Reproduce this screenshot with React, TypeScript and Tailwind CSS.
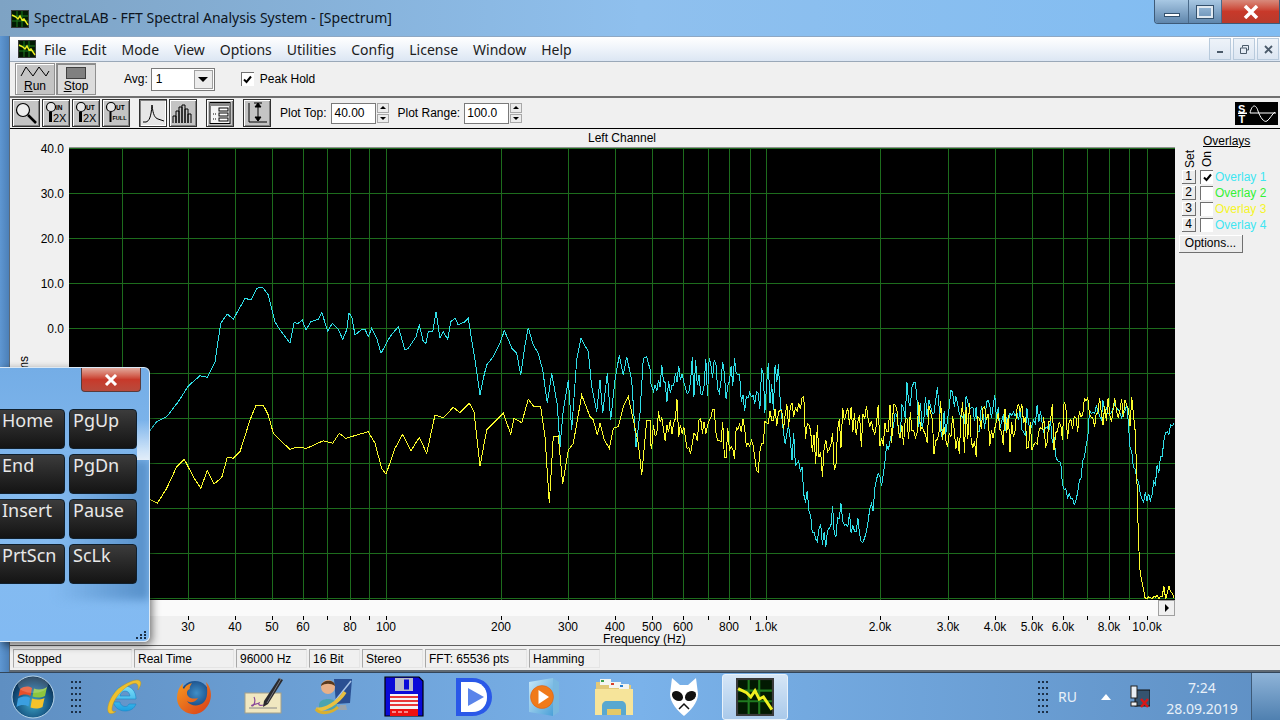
import React from "react";

const SANS = "[font-family:'Liberation_Sans',Arial,sans-serif]";
const UI = "[font-family:'Noto_Sans',sans-serif]";

type Pt = [number, number];

// traced off the left half of the plot, in zoomed crop coordinates
const cyanLeft: Pt[] = [[0,452],[20,425],[50,410],[85,365],[115,318],[150,287],[172,292],[195,245],[212,130],[232,102],[250,118],[285,55],[303,60],[320,25],[338,22],[355,45],[375,125],[390,150],[420,190],[432,128],[445,130],[457,120],[468,150],[482,125],[505,118],[515,97],[533,153],[547,130],[565,148],[578,178],[590,150],[597,100],[605,110],[615,165],[635,148],[645,148],[655,170],[665,145],[680,175],[693,220],[720,170],[745,140],[765,210],[775,205],[798,170],[808,135],[820,185],[828,190],[835,155],[848,155],[858,95],[870,175],[880,155],[893,178],[902,125],[915,115],[925,135],[945,125],[955,115],[965,180],[975,240],[990,345],[1000,295],[1010,255],[1030,230],[1050,190],[1063,152],[1078,185],[1085,205],[1100,220],[1112,285],[1125,195],[1135,143],[1150,195],[1165,220],[1178,270],[1192,370],[1205,280],[1222,375],[1230,500],[1240,390],[1255,300],[1265,450],[1280,240],[1293,175],[1315,215],[1325,320],[1340,395],[1350,300],[1358,400],[1372,280],[1382,420],[1395,300],[1408,225],[1420,285],[1430,230],[1445,300],[1458,500],[1470,400],[1480,235],[1490,230],[1500,268]];
const yellowLeft: Pt[] = [[0,658],[22,670],[50,625],[80,560],[103,538],[130,590],[152,625],[172,572],[192,612],[215,593],[232,532],[250,535],[270,515],[300,420],[318,376],[340,376],[355,405],[370,460],[395,485],[420,508],[440,502],[470,505],[520,482],[548,490],[568,460],[587,475],[655,455],[675,490],[695,565],[708,583],[735,505],[758,463],[783,512],[808,472],[830,520],[855,405],[880,413],[910,382],[930,398],[958,370],[972,395],[990,558],[1010,450],[1060,400],[1082,462],[1092,415],[1115,428],[1135,358],[1150,378],[1172,380],[1185,470],[1198,670],[1210,470],[1225,468],[1238,612],[1255,510],[1270,490],[1295,345],[1320,410],[1330,420],[1342,465],[1350,430],[1362,478],[1378,505],[1390,445],[1405,440],[1420,380],[1435,350],[1450,420],[1465,490],[1475,585],[1490,420],[1500,420]];

// right half is too dense to trace: envelope [x, mean, amplitude] plus noise
const cyanEnv: number[][] = [[0,120,40],[100,130,70],[200,120,55],[300,150,70],[380,130,80],[400,250,60],[440,370,40],[460,500,50],[510,590,30],[550,540,50],[590,530,30],[635,610,40],[660,480,30],[700,370,60],[730,280,60],[745,200,50],[800,190,70],[880,210,70],[960,240,40],[1020,200,50],[1100,240,40],[1180,250,40],[1200,340,40],[1230,470,25],[1255,480,30],[1285,350,30],[1300,240,40],[1340,210,30],[1410,220,30],[1425,350,30],[1450,460,30],[1475,490,30],[1500,400,25],[1520,310,25],[1550,245,5]];
const yellowEnv: number[][] = [[0,280,40],[80,230,40],[110,300,50],[180,240,40],[240,340,60],[265,250,30],[330,350,60],[345,240,20],[450,210,50],[500,320,70],[550,350,60],[570,250,50],[640,260,50],[760,270,60],[830,280,80],[1000,270,60],[1200,260,55],[1290,220,40],[1430,215,40],[1438,250,20],[1442,550,5],[1450,700,5],[1465,775,3],[1505,770,5],[1535,745,30],[1550,775,3]];

function noisy(env: number[][], seed: number) {
  let s = seed;
  const rnd = () => {
    s = (s * 1103515245 + 12345) % 2147483648;
    return s / 2147483648;
  };
  const out: string[] = [];
  for (let x = 0; x <= 1550; x += 5) {
    let i = 0;
    while (i < env.length - 2 && env[i + 1][0] < x) i++;
    const a = env[i];
    const b = env[i + 1];
    const t = Math.min(1, Math.max(0, (x - a[0]) / (b[0] - a[0])));
    const mean = a[1] + (b[1] - a[1]) * t;
    const amp = a[2] + (b[2] - a[2]) * t;
    const v = rnd() * 2 - 1;
    const y = mean + amp * 1.3 * Math.sign(v) * Math.pow(Math.abs(v), 1.4);
    out.push(`${(650 + x / 2.958).toFixed(1)},${(340 + Math.min(y, 777) / 3).toFixed(1)}`);
  }
  return out.join(" ");
}

const traced = (pts: Pt[]) => pts.map(([x, y]) => `${(150 + x / 3).toFixed(1)},${(280 + y / 3).toFixed(1)}`).join(" ");

const cyanTrace = traced(cyanLeft) + " " + noisy(cyanEnv, 77);
const yellowTrace = traced(yellowLeft) + " " + noisy(yellowEnv, 4242);

const vGrid = [122, 188, 235, 272, 303, 327, 350, 369, 386, 501, 568, 615, 652, 683, 708, 729, 750, 766, 880, 948, 995, 1032, 1063, 1087, 1109, 1129, 1147];
const hGrid = [148, 193, 238, 283, 328, 373, 418, 463, 508, 553, 598];
const yLabels = ["40.0", "30.0", "20.0", "10.0", "0.0"];
const xLabels: [string, number][] = [["30",188],["40",235],["50",272],["60",303],["80",350],["100",386],["200",501],["300",568],["400",615],["500",652],["600",683],["800",729],["1.0k",766],["2.0k",880],["3.0k",948],["4.0k",995],["5.0k",1032],["6.0k",1063],["8.0k",1109],["10.0k",1147]];
const xTicks = [188,235,272,303,327,350,369,386,501,568,615,652,683,708,729,750,766,880,948,995,1032,1063,1087,1109,1129,1147];

const menus = ["File", "Edit", "Mode", "View", "Options", "Utilities", "Config", "License", "Window", "Help"];
const statusCells: [string, string][] = [["Stopped","w-[119px]"],["Real Time","w-[100px]"],["96000 Hz","w-[71px]"],["16 Bit","w-[51px]"],["Stereo","w-[61px]"],["FFT: 65536 pts","w-[102px]"],["Hamming","w-[71px]"]];
const keys = ["Home", "PgUp", "End", "PgDn", "Insert", "Pause", "PrtScn", "ScLk"];
const overlays: [string, string][] = [["Overlay 1","text-[#3fe6f2]"],["Overlay 2","text-[#35f035]"],["Overlay 3","text-[#f5f52a]"],["Overlay 4","text-[#3fe6f2]"]];

function AppIcon({ size = 18 }: { size?: number }) {
  return (
    <svg width={size} height={size} viewBox="0 0 18 18">
      <rect width="18" height="18" fill="#3a3a3a" />
      <rect x="1" y="1" width="16" height="16" fill="#021a02" />
      <path d="M1 6H17M1 11H17M6 1V17M11 1V17" stroke="#1f7a1f" strokeWidth="1" />
      <path d="M1 5L5 7L7 9L9 6L11 10L13 9L17 15" stroke="#f0f020" strokeWidth="1.4" fill="none" />
    </svg>
  );
}

function ToolBtn({ children, active, className = "" }: { children: React.ReactNode; active?: boolean; className?: string }) {
  return (
    <div className={`w-[28px] h-[28px] border border-[#303030] flex items-center justify-center shrink-0 ${active ? "bg-[#e6e6e6] shadow-[inset_1px_1px_0_#808080,inset_-1px_-1px_0_#fff]" : "bg-[#c4c4c4] shadow-[inset_1px_1px_0_#fff,inset_-1px_-1px_0_#808080]"} ${className}`}>
      {children}
    </div>
  );
}

function Lens({ label, sub, full }: { label: string; sub: string; full?: boolean }) {
  return (
    <svg width="26" height="26" viewBox="0 0 26 26">
      <circle cx="8" cy="7" r="4.5" fill="#e8e8e8" stroke="#000" strokeWidth="1.2" />
      <path d="M7.5 12V22" stroke="#000" strokeWidth={full ? 2 : 3} />
      <text x="13" y="9.5" fontSize="6.500" fontWeight="700" fontFamily="Liberation Sans" fill="#000">{label}</text>
      <text x={full ? 9.5 : 10} y={full ? 20 : 22} fontSize={full ? 5.5 : 11} fontWeight={full ? 700 : 400} fontFamily="Liberation Sans" fill="#000">{sub}</text>
    </svg>
  );
}

function Spin() {
  return (
    <div className="w-[12px] h-[20px] flex flex-col gap-px shrink-0">
      <div className="flex-1 bg-[#ececec] border border-[#a8a8a8] flex items-center justify-center">
        <div className="w-0 h-0 border-x-[3px] border-x-transparent border-b-[3px] border-b-black" />
      </div>
      <div className="flex-1 bg-[#ececec] border border-[#a8a8a8] flex items-center justify-center">
        <div className="w-0 h-0 border-x-[3px] border-x-transparent border-t-[3px] border-t-black" />
      </div>
    </div>
  );
}

function Check({ on, className = "" }: { on?: boolean; className?: string }) {
  return (
    <div className={`w-[13px] h-[14px] bg-white border-l border-t border-[#707070] flex items-center justify-center shrink-0 ${className}`}>
      {on && (
        <svg width="9" height="9" viewBox="0 0 9 9">
          <path d="M1 4.5L3.5 7L8 1.5" stroke="#000" strokeWidth="2" fill="none" />
        </svg>
      )}
    </div>
  );
}

function Spectrum() {
  return (
    <svg width="1106" height="452" viewBox="69 148 1106 452" className="block bg-black shrink-0">
      <g stroke="#1d6c1d" strokeWidth="1" shapeRendering="crispEdges">
        {hGrid.map((y) => (
          <line key={y} x1="69" x2="1175" y1={y + 0.5} y2={y + 0.5} />
        ))}
        {vGrid.map((x) => (
          <line key={x} y1="148" y2="600" x1={x + 0.5} x2={x + 0.5} />
        ))}
      </g>
      <polyline points={cyanTrace} fill="none" stroke="#30dfe8" strokeWidth="1" shapeRendering="crispEdges" />
      <polyline points={yellowTrace} fill="none" stroke="#fbfb2c" strokeWidth="1" shapeRendering="crispEdges" />
    </svg>
  );
}

function Orb() {
  return (
    <svg width="44" height="44" viewBox="0 0 44 44">
      <defs>
        <radialGradient id="orb" cx="50%" cy="65%" r="60%">
          <stop offset="0" stopColor="#3fa7c8" />
          <stop offset="0.7" stopColor="#14507e" />
          <stop offset="1" stopColor="#0b2f4f" />
        </radialGradient>
      </defs>
      <circle cx="22" cy="22" r="21" fill="url(#orb)" stroke="#b9d6ea" strokeWidth="1" />
      <path d="M9 14C14 11 17 11 21 13L19.5 21C15.5 19 12 19 7.5 21.5Z" fill="#e8502a" />
      <path d="M23 13.5C27 15 31 15 36 12L34 21C29.5 23 26 23 21.5 21.5Z" fill="#8dc63f" />
      <path d="M7 23.5C12 21 15.5 21 19 23L17.5 31.5C13.5 29.5 10 29.5 5.5 32Z" fill="#3b9fe0" />
      <path d="M21 23.5C25.5 25 29 25 33.5 23L31.5 32C27 34 24 34 19.5 32.5Z" fill="#f5c22a" />
      <ellipse cx="22" cy="10" rx="15" ry="8" fill="#fff" opacity="0.18" />
    </svg>
  );
}

function IeIcon() {
  return (
    <svg width="38" height="38" viewBox="0 0 38 38">
      <defs>
        <linearGradient id="ie" x1="0" y1="0" x2="0" y2="1">
          <stop offset="0" stopColor="#7fe0fa" />
          <stop offset="1" stopColor="#1b9fe0" />
        </linearGradient>
      </defs>
      <path d="M9 21H31C31 13 26 8 20 8C13 8 8 14 8 21C8 28 13 33 20 33C25 33 29 31 31 26H24C23 28 22 28.500 20 28.500C17 28.500 15 26 15 24H9ZM15 18C15.500 15 17.500 13 20 13C23 13 24.500 15 25 18Z" fill="url(#ie)" fillRule="evenodd" stroke="#1a86c8" strokeWidth="0.6" />
      <path d="M4 35C0 31 6 15 17 8C24 4 32 0 35 3C37 5 35 9 33 12C34 7 32 4 27 6C17 10 8 22 7 30C6.500 33 8 34 11 33.500C8 36 5 36 4 35Z" fill="#eec02e" stroke="#b98d12" strokeWidth="0.4" />
    </svg>
  );
}

function FirefoxIcon() {
  return (
    <svg width="38" height="38" viewBox="0 0 38 38">
      <defs>
        <radialGradient id="ffb" cx="55%" cy="40%" r="55%">
          <stop offset="0" stopColor="#3f8fc8" />
          <stop offset="1" stopColor="#123f7a" />
        </radialGradient>
        <linearGradient id="ffo" x1="0" y1="0" x2="1" y2="1">
          <stop offset="0" stopColor="#f69a1f" />
          <stop offset="1" stopColor="#d83b1a" />
        </linearGradient>
      </defs>
      <circle cx="20" cy="18" r="15" fill="url(#ffb)" />
      <path d="M31 4C36 9 37 17 35 23C32 32 24 37 17 36C8 35 2 28 2 20C2 14 4 9 8 5C7 9 8 10 9 11C11 7 14 6 17 5C15 8 14 10 15 11C12 12 11 15 13 18C15 21 20 21 23 20C20 25 15 25 12 23C15 28 23 29 28 25C33 21 33 12 31 4Z" fill="url(#ffo)" />
    </svg>
  );
}

function SignIcon() {
  return (
    <svg width="40" height="40" viewBox="0 0 40 40">
      <rect x="1" y="16" width="36" height="20" fill="#f0e7c0" stroke="#a4a08a" strokeWidth="1" />
      <path d="M5 31H33" stroke="#888" strokeWidth="1" />
      <path d="M10 20C12 24 10 29 8 29C6 28 13 27 15 26C14 28 16 29 20 28" stroke="#8a4a9a" strokeWidth="1.2" fill="none" />
      <path d="M35 1L39 3L24 27L19 30L20 24Z" fill="#2a2a2e" />
      <path d="M35 1L37 2L23 26" stroke="#8a8a90" strokeWidth="0.8" fill="none" />
    </svg>
  );
}

function UserIcon() {
  return (
    <svg width="40" height="40" viewBox="0 0 40 40">
      <path d="M20 2L38 2L36 26L22 27Z" fill="#2a4f92" />
      <path d="M21 24L37 4" stroke="#a8c4e8" strokeWidth="1.5" />
      <path d="M26 28H32L33 33H24Z" fill="#9aa4ac" />
      <circle cx="14" cy="10" r="7" fill="#e8b088" />
      <path d="M7 9C7 3 21 1 21 9C17 6 11 6 7 9Z" fill="#5a3a1e" />
      <path d="M5 28C5 20 23 20 23 28V33H5Z" fill="#4aa4b0" />
      <path d="M2 32C10 34 24 26 31 15" stroke="#e8c040" strokeWidth="3.5" fill="none" />
      <path d="M2 32C6 38 18 36 24 30" stroke="#d8b030" strokeWidth="3" fill="none" />
    </svg>
  );
}

function FloppyIcon() {
  return (
    <svg width="40" height="42" viewBox="0 0 40 42">
      <path d="M1 1H35L39 5V40H1Z" fill="#0a0ad8" stroke="#000" strokeWidth="1.2" />
      <rect x="11" y="2" width="18" height="13" fill="#b8bcc8" />
      <rect x="20" y="3.500" width="5" height="10" fill="#0a0ad8" />
      <rect x="6" y="18" width="28" height="22" fill="#f4f4f4" />
      <path d="M6 21H34M6 25H34M6 29H34" stroke="#e83838" strokeWidth="2" />
      <rect x="6" y="33" width="28" height="7" fill="#ee1010" />
      <path d="M8 36H12M14 36H18M20 36H24" stroke="#fff" strokeWidth="1.2" />
    </svg>
  );
}

function DIcon() {
  return (
    <svg width="38" height="40" viewBox="0 0 38 40">
      <path fillRule="evenodd" d="M1 1H17C29 1 37 9 37 20C37 31 29 39 17 39H1ZM6 5V35H17C26 35 32 29 32 20C32 11 26 5 17 5Z" fill="#2a58e8" />
      <path fillRule="evenodd" d="M6 5H17C26 5 32 11 32 20C32 29 26 35 17 35H6Z" fill="#fff" />
      <path d="M13 11L29 20L13 29Z" fill="#5a84ea" />
    </svg>
  );
}

function WmpIcon() {
  return (
    <svg width="34" height="40" viewBox="0 0 34 40">
      <defs>
        <linearGradient id="wmp" x1="0" y1="0" x2="1" y2="1">
          <stop offset="0" stopColor="#c8e8f8" />
          <stop offset="1" stopColor="#4aa0d8" />
        </linearGradient>
      </defs>
      <path d="M2 5L26 1V39L2 35Z" fill="url(#wmp)" />
      <path d="M26 1L32 5V35L26 39Z" fill="#78b8e0" />
      <circle cx="15" cy="20" r="11.500" fill="#f07a1a" stroke="#d85a10" strokeWidth="0.5" />
      <path d="M11.500 13L22 20L11.500 27Z" fill="#fff" />
    </svg>
  );
}

function FolderIcon() {
  return (
    <svg width="40" height="42" viewBox="0 0 40 42">
      <path d="M2 6H14L17 9H37V38H2Z" fill="#e2c878" />
      <rect x="6" y="3" width="11" height="6" fill="#f4f4f0" />
      <rect x="7" y="4" width="3" height="2" fill="#3aa048" />
      <rect x="15" y="6" width="12" height="6" fill="#f4f4f0" />
      <rect x="17" y="7" width="3" height="2" fill="#d8402a" />
      <rect x="25" y="8" width="10" height="6" fill="#f4f4f0" />
      <rect x="26" y="9" width="3" height="2" fill="#2a80d0" />
      <path d="M1 13H39V39H1Z" fill="#f6e49a" />
      <path d="M8 39V30C8 27 10 25 13 25H27C30 25 32 27 32 30V39H27V33H13V39Z" fill="#58a8d0" />
      <rect x="13" y="33" width="14" height="6" fill="#e4c868" />
    </svg>
  );
}

function AlienIcon() {
  return (
    <svg width="30" height="40" viewBox="0 0 30 40">
      <path d="M3 1L11 8H19L27 1L29 17C29 26 21 34 15 39C9 34 1 26 1 17Z" fill="#fff" />
      <ellipse cx="8.500" cy="19" rx="6" ry="4.500" transform="rotate(35 8.500 19)" fill="#111" />
      <ellipse cx="21.500" cy="19" rx="6" ry="4.500" transform="rotate(-35 21.500 19)" fill="#111" />
      <path d="M10 32L15 27L20 32" stroke="#111" strokeWidth="1.500" fill="none" />
    </svg>
  );
}

function TrayNet() {
  return (
    <svg width="20" height="24" viewBox="0 0 20 24">
      <rect x="5" y="5" width="15" height="16" fill="#35536f" stroke="#111" strokeWidth="1" />
      <rect x="1" y="1" width="6" height="12" fill="#e8eef4" stroke="#222" strokeWidth="1" />
      <rect x="1" y="17" width="6" height="4" fill="#f0f0f0" stroke="#222" strokeWidth="1" />
      <path d="M11 14L18 22M18 14L11 22" stroke="#d81818" strokeWidth="2.500" />
    </svg>
  );
}

function Grip() {
  return (
    <div className="grid grid-cols-3 gap-x-[2px] gap-y-[4px] w-[10px]">
      {Array.from({ length: 18 }).map((_, i) => (
        <div key={i} className="w-[2px] h-[2px] bg-[#1c3048]" />
      ))}
    </div>
  );
}

export default function App() {
  return (
    <div className={`relative w-[1280px] h-[720px] overflow-hidden flex flex-col bg-[#6ea6dd] text-black ${SANS}`}>
      {/* title bar */}
      <div className="h-[36px] shrink-0 flex items-start pl-[11px] bg-linear-to-r from-[#7ea3c4] via-[#8fc0ee] to-[#80bcf2]">
        <div className="mt-[10px]"><AppIcon /></div>
        <div className={`ml-[5px] mt-[8px] text-[14px] leading-[20px] text-[#0c1420] ${UI}`}>SpectraLAB - FFT Spectral Analysis System - [Spectrum]</div>
        <div className="ml-auto flex h-[24px] rounded-bl-[4px] overflow-hidden border border-t-0 border-[#3d5a78]">
          <div className="w-[34px] flex items-end justify-center pb-[6px] border-r border-[#4a6a8a] bg-linear-to-b from-[#a8c8e4] to-[#5f86ac]">
            <div className="w-[16px] h-[4px] bg-white border border-[#33506c]" />
          </div>
          <div className="w-[33px] flex items-center justify-center border-r border-[#4a6a8a] bg-linear-to-b from-[#a8c8e4] to-[#5f86ac]">
            <div className="w-[16px] h-[12px] border-2 border-[#dfe8f0] outline outline-[#33506c]" />
          </div>
          <div className="w-[57px] flex items-center justify-center bg-linear-to-b from-[#d88a7c] via-[#c8392a] to-[#b83a2c]">
            <svg width="16" height="14" viewBox="0 0 16 14"><path d="M2 1L14 13M14 1L2 13" stroke="#fff" strokeWidth="3.500" /></svg>
          </div>
        </div>
      </div>

      <div className="flex-1 min-h-0 flex">
        {/* left window frame */}
        <div className="w-[9px] shrink-0 bg-linear-to-r from-[#5f97d2] to-[#4c80b8]" />
        <div className="flex-1 min-w-0 flex flex-col bg-[#f0f0f0] border-l border-[#5c6a78]">
          {/* menu */}
          <div className={`h-[26px] shrink-0 flex items-center pl-[8px] bg-linear-to-b from-white via-[#eef3fa] to-[#dce6f3] border-t border-[#8ea8c4] border-b border-b-[#9aa8b8] text-[14px] text-[#1c1c1c] ${UI}`}>
            <AppIcon size={18} />
            <div className="flex gap-[15px] ml-[8px]">
              {menus.map((m) => (
                <span key={m}>{m}</span>
              ))}
            </div>
            <div className="ml-auto mr-[1px] flex gap-[2px]">
              {["_", "r", "x"].map((b) => (
                <div key={b} className="w-[22px] h-[22px] border border-[#b8cadc] bg-linear-to-b from-[#eef3f9] to-[#dce6f2] flex items-center justify-center">
                  {b === "_" && <div className="w-[6px] h-[2px] mt-[5px] bg-[#4a5a6a]" />}
                  {b === "r" && <svg width="9" height="9" viewBox="0 0 9 9"><path d="M2.500 2.500V.5H8.500V5H6.500M.5 3H6.500V8.500H.5Z" stroke="#4a5a6a" fill="none" /></svg>}
                  {b === "x" && <svg width="9" height="9" viewBox="0 0 9 9"><path d="M1 1L8 8M8 1L1 8" stroke="#4a5a6a" strokeWidth="1.800" /></svg>}
                </div>
              ))}
            </div>
          </div>

          {/* run / stop toolbar */}
          <div className="h-[36px] shrink-0 flex items-center pl-[5px] border-b-2 border-[#707070] text-[12px]">
            <div className="w-[40px] h-[32px] bg-[#c4c4c4] border border-[#909090] shadow-[inset_1px_1px_0_#fff] flex flex-col items-center">
              <svg width="30" height="13" viewBox="0 0 30 13" className="mt-[1px]"><path d="M1 11L6 2L13 11L19 2L26 11L29 6" stroke="#000" fill="none" /></svg>
              <span className="leading-[12px] mt-[2px]"><u>R</u>un</span>
            </div>
            <div className="w-[40px] h-[32px] ml-[1px] bg-[#dcdcdc] border border-[#909090] shadow-[inset_1px_1px_0_#8a8a8a] flex flex-col items-center">
              <div className="w-[20px] h-[12px] mt-[3px] bg-[#808080] border border-[#404040]" />
              <span className="leading-[12px] mt-[1px]"><u>S</u>top</span>
            </div>
            <span className="ml-[28px]">Avg:</span>
            <div className="ml-[3px] w-[64px] h-[23px] bg-white border border-[#7a7a7a] flex items-center pl-[4px] pr-px">
              <span className="text-[12px]">1</span>
              <div className="ml-auto w-[19px] h-[19px] bg-[#ececec] border border-[#a0a0a0] flex items-center justify-center">
                <div className="w-0 h-0 border-x-[5px] border-x-transparent border-t-[5px] border-t-black" />
              </div>
            </div>
            <Check on className="ml-[26px]" />
            <span className="ml-[6px]">Peak Hold</span>
          </div>

          {/* plot toolbar */}
          <div className="h-[31px] shrink-0 flex items-center pl-[2px] pr-[2px] border-b border-black text-[12px]">
            <div className="flex gap-[2px]">
              <ToolBtn>
                <svg width="24" height="24" viewBox="0 0 24 24"><circle cx="9" cy="9" r="6.500" fill="#eee" stroke="#000" strokeWidth="1.200" /><path d="M14 14L22 22" stroke="#000" strokeWidth="2.500" /></svg>
              </ToolBtn>
              <ToolBtn><Lens label="IN" sub="2X" /></ToolBtn>
              <ToolBtn><Lens label="UT" sub="2X" /></ToolBtn>
              <ToolBtn><Lens label="UT" sub="FULL" full /></ToolBtn>
            </div>
            <ToolBtn active className="ml-[9px]">
              <svg width="24" height="24" viewBox="0 0 24 24"><path d="M2 21H5C8 20 10 17 11 4C12 14 14 17 17 18L23 20" stroke="#000" fill="none" /></svg>
            </ToolBtn>
            <ToolBtn className="ml-[2px]">
              <svg width="24" height="24" viewBox="0 0 24 24"><path d="M2 22V15H5V22M5 22V10H8V22M8 22V6H11V22M11 22V4H14V22M14 22V8H17V22M17 22V13H20V22" stroke="#000" fill="none" /></svg>
            </ToolBtn>
            <ToolBtn className="ml-[9px]">
              <svg width="24" height="24" viewBox="0 0 24 24"><rect x="2" y="1.500" width="20" height="21" fill="#f4f4f4" stroke="#000" /><rect x="2" y="2" width="20" height="3" fill="#888" /><rect x="11" y="7" width="9" height="3" fill="#fff" stroke="#000" /><rect x="11" y="12" width="9" height="3" fill="#fff" stroke="#000" /><rect x="11" y="17" width="9" height="3" fill="#fff" stroke="#000" /><path d="M5 13H8M5 18H8" stroke="#000" strokeDasharray="1 1" /></svg>
            </ToolBtn>
            <ToolBtn className="ml-[9px]">
              <svg width="24" height="24" viewBox="0 0 24 24"><path d="M4 2V21H22" stroke="#000" fill="none" /><path d="M13 3V19M10 6L13 2L16 6ZM10 16L13 20L16 16Z" stroke="#000" fill="#000" /><path d="M9 2H17" stroke="#000" /></svg>
            </ToolBtn>
            <span className="ml-[9px]">Plot Top:</span>
            <div className="ml-[5px] w-[45px] h-[21px] bg-white border border-[#7a7a7a] px-[2px] leading-[19px]">40.00</div>
            <div className="ml-[1px]"><Spin /></div>
            <span className="ml-[8px]">Plot Range:</span>
            <div className="ml-[4px] w-[45px] h-[21px] bg-white border border-[#7a7a7a] px-[2px] leading-[19px]">100.0</div>
            <div className="ml-[1px]"><Spin /></div>
            <div className="ml-auto w-[43px] h-[23px] bg-black flex items-center justify-center gap-[1px]">
              <svg width="42" height="21" viewBox="0 0 42 21">
                <text x="2" y="9.500" fontSize="11" fontWeight="700" fontFamily="Liberation Sans" fill="#fff">S</text>
                <text x="2.500" y="20" fontSize="11" fontWeight="700" fontFamily="Liberation Sans" fill="#fff">T</text>
                <rect x="2" y="9.500" width="9" height="1.500" fill="#fff" />
                <path d="M14 10C16 1 20 1 22 8C24 14 28 20 31 18C34 16 36 11 39 9M14 10H40" stroke="#fff" fill="none" />
              </svg>
            </div>
          </div>

          {/* plot area */}
          <div className="flex-1 min-h-0 flex border-b border-[#606060]">
            <div className="w-[1165px] shrink-0 flex flex-col relative">
              <div className="h-[19px] shrink-0 pl-[59px]">
                <div className="h-full text-center text-[12px] leading-[18px] border-b border-[#909090]">Left Channel</div>
              </div>
              <div className="flex h-[452px] shrink-0">
                <div className="w-[59px] h-[452px] shrink-0 flex flex-col -mt-[6px] items-end pr-[5px] text-[12px] relative">
                  {yLabels.map((l) => (
                    <div key={l} className="h-[45px] leading-[14px]">{l}</div>
                  ))}
                  <div className="absolute left-[-5px] top-[226px] -rotate-90 origin-center text-[12px] leading-[14px] whitespace-nowrap">dB rms</div>
                </div>
                <Spectrum />
              </div>
              {/* scroll strip and frequency axis */}
              <div className="ml-[59px] h-[16px] bg-[#fafafa] shrink-0" />
              <div className="relative h-[14px] shrink-0 -ml-[10px]">
                {xTicks.map((x) => (
                  <div key={x} className="absolute top-0 w-px h-[4px] bg-black" style={{ left: x }} />
                ))}
                {xLabels.map(([l, x]) => (
                  <div key={l} className="absolute top-[4px] -translate-x-1/2 text-[12px] leading-[14px]" style={{ left: x }}>{l}</div>
                ))}
              </div>
              <div className="text-[12px] leading-[12px] pl-[593px] mt-[3px]">Frequency (Hz)</div>
              <div className="absolute left-[1148px] top-[471px] w-[17px] h-[16px] bg-[#f0f0f0] border border-[#a0a0a0] flex items-center justify-center">
                <div className="w-0 h-0 border-y-[4px] border-y-transparent border-l-[4px] border-l-black" />
              </div>
            </div>

            {/* overlays panel */}
            <div className="flex-1 min-w-0 text-[12px] pt-[5px] pl-[4px]">
              <div className="pl-[24px] leading-[14px] underline">Overlays</div>
              <div className="flex h-[22px] pl-[4px] gap-[3px]">
                <div className="w-[14px] flex items-center justify-center"><span className="-rotate-90 leading-[14px]">Set</span></div>
                <div className="w-[14px] flex items-center justify-center"><span className="-rotate-90 leading-[14px]">On</span></div>
              </div>
              <div className="flex flex-col gap-[2px] pl-[3px]">
                {overlays.map(([name, color], i) => (
                  <div key={i} className="flex items-center h-[14px]">
                    <div className="w-[14px] h-[14px] border-r border-b border-[#707070] bg-[#ececec] shadow-[inset_1px_1px_0_#fff] text-center leading-[13px]">{i + 1}</div>
                    <Check on={i === 0} className="ml-[4px]" />
                    <span className={`ml-[2px] ${color}`}>{name}</span>
                  </div>
                ))}
              </div>
              <div className="mt-[3px] w-[64px] h-[18px] bg-[#ececec] border-r border-b border-[#707070] shadow-[inset_1px_1px_0_#fff] text-center leading-[17px]">Options...</div>
            </div>
          </div>

          {/* status bar */}
          <div className="h-[26px] shrink-0 flex items-center gap-[2px] pl-[3px] border-b-2 border-[#606a74] text-[12px]">
            {statusCells.map(([t, w]) => (
              <div key={t} className={`${w} h-[19px] pl-[3px] leading-[18px] border-l border-t border-[#a8a8a8] border-r border-r-[#e4e4e4] border-b border-b-[#e4e4e4] shrink-0 whitespace-nowrap`}>{t}</div>
            ))}
          </div>
        </div>
      </div>

      {/* taskbar */}
      <div className={`h-[48px] shrink-0 flex items-center bg-linear-to-r from-[#5f8fc2] via-[#7ab2ea] to-[#5f90c4] border-t border-[#33465a] text-[#e8f0f8] ${UI}`}>
        <div className="w-[66px] flex justify-center"><Orb /></div>
        <div className="w-[23px] flex justify-start pl-[5px]"><Grip /></div>
        <div className="w-[70px] flex justify-center"><IeIcon /></div>
        <div className="w-[70px] flex justify-center"><FirefoxIcon /></div>
        <div className="w-[70px] flex justify-center"><SignIcon /></div>
        <div className="w-[70px] flex justify-center"><UserIcon /></div>
        <div className="w-[70px] flex justify-center"><FloppyIcon /></div>
        <div className="w-[70px] flex justify-center"><DIcon /></div>
        <div className="w-[70px] flex justify-center"><WmpIcon /></div>
        <div className="w-[70px] flex justify-center"><FolderIcon /></div>
        <div className="w-[70px] flex justify-center"><AlienIcon /></div>
        <div className="ml-[3px] w-[66px] h-[46px] rounded-[3px] bg-linear-to-b from-[#d6e6f6] to-[#a9c9ea] border border-[#e8f2fb] flex items-center justify-center">
          <AppIcon size={38} />
        </div>
        <div className="ml-[250px]"><Grip /></div>
        <span className="ml-[10px] text-[14px]">RU</span>
        <div className="ml-[24px] w-0 h-0 border-x-[5px] border-x-transparent border-b-[6px] border-b-white" />
        <div className="ml-[19px]"><TrayNet /></div>
        <div className="ml-[7px] mt-[3px] w-[90px] text-center text-[14px] leading-[21px]">
          <div>7:24</div>
          <div>28.09.2019</div>
        </div>
        <div className="ml-auto w-[29px] h-full bg-linear-to-b from-[#8fb4d8] to-[#4f80b0] border-l border-[#3d5a78]" />
      </div>

      {/* on-screen keyboard, floating over the app */}
      <div className={`absolute left-0 top-[367px] w-[150px] h-[275px] rounded-r-[6px] border border-l-0 border-[#dce9f5] bg-linear-to-b from-[#74ade6] via-[#85bbf0] to-[#82baf2] shadow-[2px_3px_8px_rgba(0,0,0,0.55)] overflow-hidden ${UI}`}>
        <div className="absolute right-0 top-[92px] w-[95px] h-[140px] blur-[4px] bg-linear-to-r from-transparent to-[#568fc8]" />
        <div className="absolute right-0 top-[52px] w-[12px] h-[40px] bg-linear-to-b from-transparent to-white/80" />
        <div className="relative flex justify-end pr-[8px]">
          <div className="w-[60px] h-[24px] rounded-b-[4px] border border-t-0 border-[#5a3a3a] bg-linear-to-b from-[#e0a89c] via-[#c8392a] to-[#b84a3c] flex items-center justify-center">
            <svg width="14" height="12" viewBox="0 0 14 12"><path d="M2 1L12 11M12 1L2 11" stroke="#fff" strokeWidth="3" /></svg>
          </div>
        </div>
        <div className="relative grid grid-cols-[70px_68px] gap-x-[4px] gap-y-[5px] -ml-[5px] mt-[17px]">
          {keys.map((k, i) => (
            <div key={k} className={`h-[40px] rounded-[4px] border border-[#10202e] bg-linear-to-b from-[#3c3c3c] to-[#141414] text-[18px] leading-[20px] text-[#e8e8e8] ${i % 2 ? "pl-[3px]" : "pl-[6px]"}`}>{k}</div>
          ))}
        </div>
        <div className="absolute right-[2px] bottom-[2px] grid grid-cols-3 gap-[1px] w-[11px]">
          {[0, 0, 1, 0, 1, 1, 1, 1, 1].map((on, i) => (
            <div key={i} className={`w-[2px] h-[2px] ${on ? "bg-[#1c3048]" : ""}`} />
          ))}
        </div>
      </div>
    </div>
  );
}
